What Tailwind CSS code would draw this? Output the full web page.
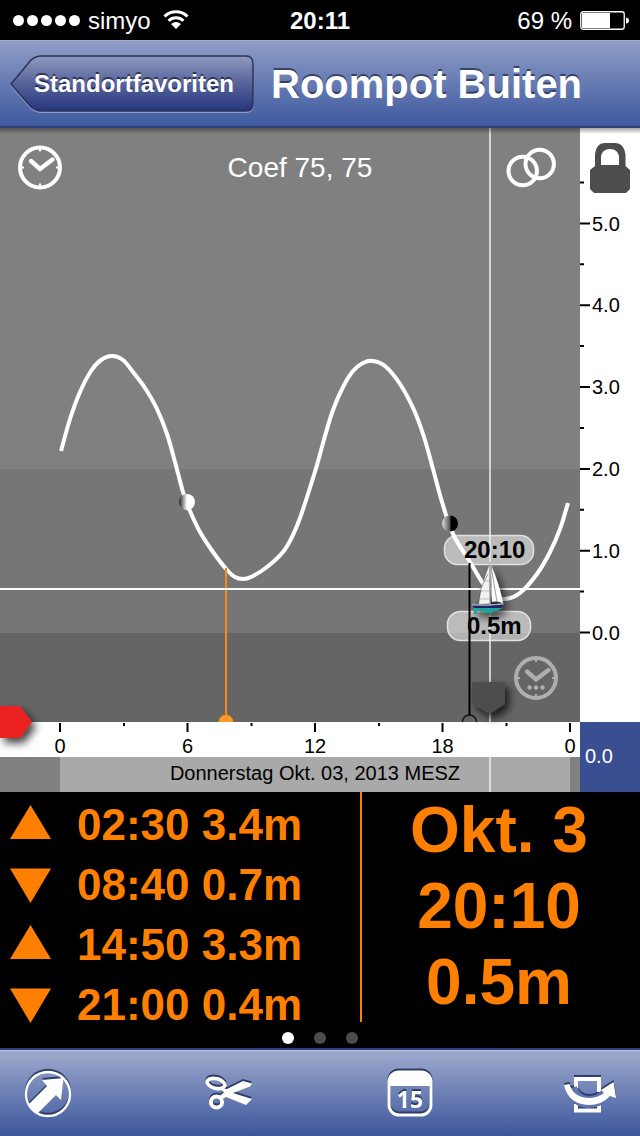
<!DOCTYPE html>
<html lang="de">
<head>
    <meta charset="UTF-8">
    <meta name="viewport" content="width=device-width, initial-scale=1.0">
    <title>Roompot Buiten</title>
    <script src="https://cdn.jsdelivr.net/npm/@tailwindcss/browser@4"></script>
</head>
<body class="bg-black font-['Liberation_Sans',Arial,sans-serif]">
    <!-- Status bar -->
    <div class="grid h-10 grid-cols-3 items-center bg-black pt-0.5 text-2xl text-white">
        <div class="flex items-center pl-[13px]">
            <svg class="h-3 w-[68px]" viewBox="0 0 68 12" fill="#fff">
                <circle cx="5.5" cy="5.5" r="5.5"/><circle cx="19.5" cy="5.5" r="5.5"/><circle cx="33.5" cy="5.5" r="5.5"/><circle cx="47.5" cy="5.5" r="5.5"/><circle cx="61.5" cy="5.5" r="5.5"/>
            </svg>
            <span class="ml-[7px]">simyo</span>
            <svg class="mb-1 ml-3 h-5 w-[26px]" viewBox="0 0 26 20" fill="none" stroke="#fff" stroke-width="3">
                <path d="M1.500 7.500A16.500 16.500 0 0 1 24.500 7.500M5.500 11.800A10.700 10.700 0 0 1 20.500 11.800"/>
                <path d="M13 20L8 15Q13 11 18 15Z" fill="#fff" stroke="none"/>
            </svg>
        </div>
        <div class="text-center font-bold">20:11</div>
        <div class="flex items-center justify-end gap-2 pr-[11px]">
            <span>69 %</span>
            <svg class="h-5 w-[49px]" viewBox="0 0 49 20">
                <rect x=".75" y=".75" width="43.500" height="17.500" rx="2.500" fill="none" stroke="#fff" stroke-width="1.300"/>
                <rect x="2" y="2" width="28" height="15" fill="#fff"/>
                <path d="M46 6.500Q49 7 49 9.500T46 12.500Z" fill="#fff"/>
            </svg>
        </div>
    </div>

    <!-- Navigation bar -->
    <header class="flex h-22 items-center gap-[17px] border-t border-b-2 border-t-[#a3aed0] border-b-[#2f4278] bg-linear-to-b from-[#8f9dc6] to-[#3f599e] pl-[10px] text-white">
        <button class="relative h-[58px] w-[244px] shrink-0 pl-1 text-2xl font-bold [text-shadow:0_-2px_0_rgba(20,25,60,0.700)]">
            <svg class="absolute inset-0 h-full w-full" viewBox="0 0 244 58">
                <defs>
                    <linearGradient id="back" x2="0" y2="1">
                        <stop offset="0" stop-color="#9299be"/>
                        <stop offset=".5" stop-color="#56639b"/>
                        <stop offset="1" stop-color="#25367d"/>
                    </linearGradient>
                </defs>
                <path d="M1 30L21 6Q26 2 31 2H236Q243 2 243 9V49Q243 57 236 57H31Q26 57 21 53Z" fill="none" stroke="#8d9bc8" stroke-width="2"/>
                <path d="M1 29L21 5Q26 1 31 1H236Q243 1 243 9V48Q243 56 236 56H31Q26 56 21 52Z" fill="url(#back)" stroke="#2b3257" stroke-width="1.500"/>
            </svg>
            <span class="relative">Standortfavoriten</span>
        </button>
        <h1 class="text-[40px] font-bold whitespace-nowrap [text-shadow:0_-2px_0_rgba(30,35,65,0.700)]">Roompot Buiten</h1>
    </header>

    <!-- Tide chart -->
    <main class="relative">
        <svg id="chart" class="block w-full" viewBox="0 0 640 664" font-size="20">
            <defs>
                <clipPath id="plot"><rect width="580" height="594"/></clipPath>
                <linearGradient id="top" x2="0" y2="1">
                    <stop offset="0" stop-opacity=".35"/>
                    <stop offset="1" stop-opacity="0"/>
                </linearGradient>
                <linearGradient id="rise">
                    <stop offset="0" stop-color="#222"/>
                    <stop offset=".5" stop-color="#fff"/>
                </linearGradient>
                <linearGradient id="set">
                    <stop offset="0" stop-color="#ddd"/>
                    <stop offset=".5" stop-color="#555"/>
                    <stop offset=".55" stop-color="#000"/>
                </linearGradient>
                <filter id="shadow" x="-50%" y="-50%" width="200%" height="200%">
                    <feDropShadow dx="4" dy="5" stdDeviation="4" flood-opacity=".75"/>
                </filter>
            </defs>

            <rect width="640" height="664" fill="#fff"/>
            <rect width="580" height="341" fill="#808080"/>
            <rect y="341" width="580" height="164" fill="#767676"/>
            <rect y="505" width="580" height="89" fill="#656565"/>

            <rect y="629" width="580" height="35" fill="#808080"/>
            <rect x="60" y="629" width="510" height="35" fill="#a9a9a9"/>
            <text x="315" y="652" text-anchor="middle">Donnerstag Okt. 03, 2013 MESZ</text>

            <rect x="580" y="594" width="60" height="70" fill="#3a4e92"/>
            <text x="585" y="635" fill="#fff">0.0</text>

            <g id="ticks" stroke="#000" stroke-width="2"></g>
            <g id="hours" text-anchor="middle"></g>
            <g id="heights"></g>

            <g fill="#fff" fill-opacity=".5" stroke="#e2e2e2" stroke-width="1.500">
                <rect x="444.500" y="407.500" width="89" height="29" rx="13"/>
                <rect x="447.500" y="483.500" width="83" height="29" rx="13"/>
            </g>

            <g clip-path="url(#plot)">
                <path id="curve" fill="none" stroke="#fff" stroke-width="4"/>
                <path d="M226 440V594" stroke="#f58a1a" stroke-width="2"/>
                <circle cx="226" cy="594" r="7" fill="#fb9a26" stroke="#f58a1a"/>
                <path d="M469.500 435V587" stroke="#000" stroke-width="2"/>
                <circle cx="469.500" cy="594" r="7" fill="#656565" stroke="#111" stroke-width="1.500"/>
                <path d="M0 461H580" stroke="#fff" stroke-width="2"/>
            </g>
            <path d="M490 0V594M490 629V664" stroke="#eee" stroke-width="1.500"/>
            <circle cx="187" cy="374" r="8" fill="url(#rise)"/>
            <circle cx="450" cy="395.500" r="8" fill="url(#set)"/>

            <!-- Current time and height -->
            <g font-size="24" font-weight="bold">
                <text x="464" y="430">20:10</text>
                <text x="467" y="506">0.5m</text>
            </g>

            <!-- Boat -->
            <g filter="url(#shadow)">
                <path d="M489 438Q481 458 479 476L490 475.500Z" fill="#f2f2f2"/>
                <path d="M491 437Q499 455 503 475Q496 472 492 474Z" fill="#fff"/>
                <path d="M484 453H490M481 463H490M480 471H490" stroke="#bbb" stroke-width="1"/>
                <path d="M490 434V477M491 438L497 474M488 446L473 476" fill="none" stroke="#888" stroke-width=".8"/>
                <path d="M474 480H502L497 483H494L492 485H484L482 482L477 483V486H474Z" fill="#1fa59b"/>
                <path d="M472 477Q488 478 503.500 476L501 480H474Z" fill="#24246b"/>
                <path d="M472 477Q488 478 503.500 476" fill="none" stroke="#ddd" stroke-width=".8"/>
            </g>

            <path d="M472 554H505V576L490 586L472 576Z" fill="#4d4d4d" filter="url(#shadow)"/>
            <path d="M0 578H20L32 594L20 610H0Z" fill="#ec2024" filter="url(#shadow)"/>
            <rect width="640" height="6" fill="url(#top)"/>
        </svg>

        <div class="absolute inset-x-0 top-0 flex items-center pt-[14px] pr-[10px] pl-[18px] text-white">
            <button class="shrink-0" aria-label="Uhrzeit">
                <svg class="block h-[52px] w-11" viewBox="0 0 44 52" fill="none" stroke="#fff">
                    <circle cx="22" cy="25.500" r="20" stroke-width="4"/>
                    <path d="M22 7V9.500M22 44V41.500M4 25.500H6M40 25.500H38" stroke-width="2"/>
                    <path d="M13 19L22 27L34.500 17.500" stroke-width="4.400" stroke-linecap="round"/>
                </svg>
            </button>
            <p class="grow pl-8 text-center text-[28px]">Coef 75, 75</p>
            <button class="shrink-0" aria-label="Vergleich">
                <svg class="block h-[52px] w-[50px]" viewBox="0 0 50 52" fill="none" stroke="#fff" stroke-width="4">
                    <circle cx="16.700" cy="29" r="14.200"/>
                    <circle cx="33.700" cy="22" r="14.200"/>
                </svg>
            </button>
            <button class="ml-[34px] shrink-0" aria-label="Sperren">
                <svg class="block h-[52px] w-10" viewBox="0 0 40 52" fill="#4d4d4d">
                    <path d="M5 24V13Q6 1 15 1H25Q34 1 35.500 13V24L40 28V47L36 51H4L0 47V28ZM11 23H29V15Q28 7 20 7T11 15Z" fill-rule="evenodd"/>
                </svg>
            </button>
        </div>

        <button class="absolute top-[528px] left-[80.250%]" aria-label="Jetzt">
            <svg class="block h-11 w-11" viewBox="0 0 44 44" fill="none" stroke="#aeaeae">
                <circle cx="22" cy="22" r="20" stroke-width="4"/>
                <path d="M22 3.500V6M22 40.500V38M4 22H6M40 22H38" stroke-width="2"/>
                <path d="M13 15.500L22 23.500L34.500 14" stroke-width="4.400" stroke-linecap="round"/>
                <path d="M15.500 31.500H15.600M22 31.500H22.100M28.500 31.500H28.600" stroke-width="4.400" stroke-linecap="round"/>
            </svg>
        </button>
    </main>

    <!-- High and low water -->
    <section class="bg-black font-bold text-[#ff8000]">
        <div class="grid grid-cols-[9fr_7fr] items-start">
            <table class="mt-[9px] w-full text-[44px] leading-12">
                <tbody>
                    <tr>
                        <td class="w-[77px] pb-3 pl-[10px]"><svg class="block h-10 w-[41px]" viewBox="0 0 41 40" fill="#ff8000"><path d="M20.500 0L41 34H0Z"/></svg></td>
                        <td class="pb-3">02:30 3.4m</td>
                    </tr>
                    <tr>
                        <td class="w-[77px] pb-3 pl-[10px]"><svg class="block h-10 w-[41px]" viewBox="0 0 41 40" fill="#ff8000"><path d="M0 3.500H41L20.500 38Z"/></svg></td>
                        <td class="pb-3">08:40 0.7m</td>
                    </tr>
                    <tr>
                        <td class="w-[77px] pb-3 pl-[10px]"><svg class="block h-10 w-[41px]" viewBox="0 0 41 40" fill="#ff8000"><path d="M20.500 0L41 34H0Z"/></svg></td>
                        <td class="pb-3">14:50 3.3m</td>
                    </tr>
                    <tr>
                        <td class="w-[77px] pl-[10px]"><svg class="block h-10 w-[41px]" viewBox="0 0 41 40" fill="#ff8000"><path d="M0 3.500H41L20.500 38Z"/></svg></td>
                        <td>21:00 0.4m</td>
                    </tr>
                </tbody>
            </table>
            <div class="border-l-2 border-[#ff8000] pr-1 pb-0.5 text-center text-[64px] leading-19">
                <p>Okt. 3</p>
                <p>20:10</p>
                <p>0.5m</p>
            </div>
        </div>
        <div class="flex justify-center gap-5 pt-[3px] pb-1">
            <span class="h-3 w-3 rounded-full bg-white"></span>
            <span class="h-3 w-3 rounded-full bg-[#4d4d4d]"></span>
            <span class="h-3 w-3 rounded-full bg-[#4d4d4d]"></span>
        </div>
    </section>

    <!-- Toolbar -->
    <footer class="border-t-2 border-[#2c407a]">
        <nav class="flex h-[86px] items-center justify-between border-t border-[#b9c1dc] bg-linear-to-b from-[#9faacd] to-[#3d569b] px-6">
            <button aria-label="Standort">
                <svg class="block h-12 w-12 drop-shadow-[0_-2px_0_#2d3c68]" viewBox="0 0 48 48">
                    <circle cx="24" cy="24" r="22" fill="none" stroke="#fff" stroke-width="2.400"/>
                    <path d="M5 34L23 16L18 10L39.500 8L37 30L32 25L14 43Q8 40 5 34Z" fill="#fff"/>
                </svg>
            </button>
            <button aria-label="Ausschneiden">
                <svg class="block h-12 w-12 drop-shadow-[0_-2px_0_#2d3c68]" viewBox="3 1 48 48" fill="none" stroke="#fff">
                    <ellipse cx="14" cy="14.500" rx="9" ry="4.800" transform="rotate(14 14 14.500)" stroke-width="3.600"/>
                    <circle cx="14.500" cy="33" r="5.600" stroke-width="4"/>
                    <path d="M18 19.500L25 20L41 12L50 14.500L48 17.500L31 24L50 30L44 36L24 28L20 30.500L17.500 27L22 23.500Z" fill="#fff" stroke="none"/>
                </svg>
            </button>
            <button aria-label="Kalender">
                <svg class="block h-12 w-[46px] overflow-visible drop-shadow-[0_-2px_0_#2d3c68]" viewBox="-2 0 46 48">
                    <rect x="2" y="2" width="42" height="43" rx="10" fill="none" stroke="#fff" stroke-width="3"/>
                    <path d="M1 16V13Q1 1 13 1H33Q45 1 45 13V16Z" fill="#fff"/>
                    <text x="23" y="38" text-anchor="middle" font-size="23" font-weight="bold" fill="#fff" font-family="'Open Sans', sans-serif">15</text>
                </svg>
            </button>
            <button aria-label="Drehen">
                <svg class="block h-12 w-[52px] drop-shadow-[0_-2px_0_#2d3c68]" viewBox="0 0 52 48">
                    <path d="M12 24V9H35V22M12 34V40.500H35V33" fill="none" stroke="#fff" stroke-width="4"/>
                    <path d="M7 18Q11 31 24 32Q36 32 42 24" fill="none" stroke="#5f74b0" stroke-width="12"/>
                    <path d="M0 15L5.500 14Q9 27 24 28Q34 28 40 23L37 20L49.500 12L52 28L46 26Q38 35 25 35Q4 34 0 15Z" fill="#fff"/>
                </svg>
            </button>
        </nav>
    </footer>

    <script>
        const tide = [
            [61, 323], [70, 291], [80, 264], [91, 243], [101, 232], [112, 228], [123, 232], [133, 244], [145, 260], [157, 281],
            [167, 306], [175, 334], [183, 364], [190, 383], [200, 404], [213, 424], [227, 442], [235, 449], [243, 451], [251, 449],
            [267, 439], [283, 424], [292, 409], [300, 390], [308, 366], [317, 337], [325, 308], [333, 282], [343, 259], [353, 243],
            [363, 235], [373, 233], [385, 238], [400, 256], [414, 282], [424, 309], [433, 341], [440, 367], [447, 390],
            [455, 410], [470, 434], [482, 454], [493, 467], [505, 471], [520, 465], [537, 446], [550, 424], [560, 401], [568, 375]
        ];

        // smooth line through the tide points
        let d = `M${tide[0]}`;
        for (let i = 0; i < tide.length - 1; i++) {
            const p0 = tide[i - 1] || tide[i];
            const p1 = tide[i];
            const p2 = tide[i + 1];
            const p3 = tide[i + 2] || p2;
            d += `C${p1[0] + (p2[0] - p0[0]) / 6},${p1[1] + (p2[1] - p0[1]) / 6} ${p2[0] - (p3[0] - p1[0]) / 6},${p2[1] - (p3[1] - p1[1]) / 6} ${p2}`;
        }
        document.getElementById('curve').setAttribute('d', d);

        let ticks = '';
        let hours = '';
        let heights = '';
        ['0', '6', '12', '18', '0'].forEach((label, i) => {
            const x = 60 + i * 127.5;
            ticks += `<path d="M${x} 595V604"/>`;
            if (i < 4) ticks += `<path d="M${x + 64} 595V598"/>`;
            hours += `<text x="${x}" y="625">${label}</text>`;
        });
        for (let m = 0; m <= 5; m++) {
            const y = 504.5 - m * 81.8;
            ticks += `<path d="M580 ${y}H590M580 ${y - 41}H584"/>`;
            heights += `<text x="592" y="${y + 7}">${m}.0</text>`;
        }
        document.getElementById('ticks').innerHTML = ticks;
        document.getElementById('hours').innerHTML = hours;
        document.getElementById('heights').innerHTML = heights;
    </script>
</body>
</html>
